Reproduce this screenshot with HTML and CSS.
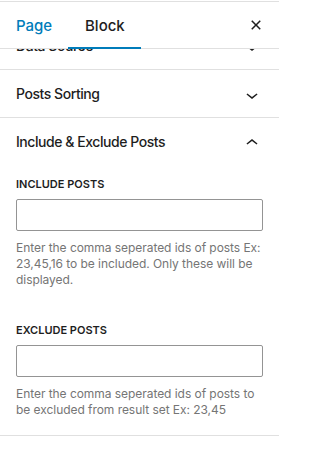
FILE: index.html
```html
<!DOCTYPE html>
<html lang="en">
<head>
<meta charset="utf-8">
<title>Block settings</title>
<link rel="stylesheet" href="styles.css">
</head>
<body>
<div class="sidebar">
  <div class="header">
    <div class="tab tab--page">Page</div>
    <div class="tab tab--block">Block</div>
    <button class="close" aria-label="Close">
      <svg viewBox="0 0 24 24" width="24" height="24"><path d="M12 13.06l3.712 3.713 1.061-1.06L13.061 12l3.713-3.712-1.06-1.06L12 10.938 8.288 7.227l-1.061 1.06L10.939 12l-3.712 3.712 1.06 1.061L12 13.061z"/></svg>
    </button>
  </div>
  <div class="panel panel--scrolled">
    <div class="toggle">
      <span>Data Source</span>
      <svg class="chev" viewBox="0 0 24 24" width="24" height="24"><path d="M17.5 11.6L12 16l-5.5-4.4.9-1.2L12 14l4.6-3.6 1 1.2z"/></svg>
    </div>
  </div>
  <div class="panel">
    <div class="toggle">
      <span>Posts Sorting</span>
      <svg class="chev" viewBox="0 0 24 24" width="24" height="24"><path d="M17.5 11.6L12 16l-5.5-4.4.9-1.2L12 14l4.6-3.6 1 1.2z"/></svg>
    </div>
  </div>
  <div class="panel">
    <div class="toggle">
      <span>Include &amp; Exclude Posts</span>
      <svg class="chev" viewBox="0 0 24 24" width="24" height="24"><path d="M6.5 12.4L12 8l5.5 4.4-.9 1.2L12 10l-4.6 3.6-1-1.2z"/></svg>
    </div>
    <div class="panel-body">
      <div class="control">
        <label class="label">Include Posts</label>
        <input class="field" type="text">
        <p class="help">Enter the comma seperated ids of posts Ex: 23,45,16 to be included. Only these will be displayed.</p>
      </div>
      <div class="control">
        <label class="label">Exclude Posts</label>
        <input class="field" type="text">
        <p class="help">Enter the comma seperated ids of posts to be excluded from result set Ex: 23,45</p>
      </div>
    </div>
  </div>
</div>
</body>
</html>
```

FILE: styles.css
```css
* { box-sizing: border-box; }

html, body {
  width: 279px;
  overflow: hidden;
}

body {
  margin: 0;
  padding-top: 1px;
  background: #fff;
  font-family: Inter, "Noto Sans", sans-serif;
  color: #1e1e1e;
}

.sidebar {
  width: 279px;
  border-top: 1px solid #e0e0e0;
}

.header {
  display: flex;
  height: 47px;
  border-bottom: 1px solid #e0e0e0;
}

.tab {
  position: relative;
  display: flex;
  align-items: center;
  font-size: 15px;
  font-weight: 500;
  white-space: nowrap;
}

.tab--page {
  width: 68px;
  padding-left: 16px;
  color: #007cba;
}

.tab--block {
  width: 73px;
  padding-left: 17px;
  color: #1e1e1e;
}

.tab--block::after {
  content: "";
  position: absolute;
  left: 0;
  right: 0;
  bottom: -1px;
  height: 2px;
  background: #007cba;
}

.close {
  margin: 0 11px 0 auto;
  align-self: center;
  width: 24px;
  height: 24px;
  padding: 0;
  border: 0;
  background: none;
  display: flex;
}

.close svg, .chev { fill: #1e1e1e; }

.panel {
  border-bottom: 1px solid #e0e0e0;
}

.panel--scrolled {
  height: 21px;
  overflow: hidden;
  display: flex;
  flex-direction: column;
  justify-content: flex-end;
}

.toggle {
  flex: none;
  height: 47px;
  display: flex;
  align-items: center;
  justify-content: space-between;
  padding: 0 15px 0 16px;
  font-size: 14px;
  letter-spacing: -0.45px;
  font-weight: 500;
}

.chev { margin-top: 2px; }

.panel-body {
  padding: 11px 16px 17px;
}

.control + .control {
  margin-top: 34px;
}

.label {
  display: block;
  font-size: 11px;
  line-height: 16px;
  font-weight: 600;
  text-transform: uppercase;
  margin-bottom: 7px;
}

.field {
  display: block;
  width: 100%;
  height: 32px;
  margin: 0;
  border: 1px solid #949494;
  border-radius: 2px;
  background: #fff;
}

.help {
  margin: 9px 0 0;
  font-size: 12px;
  letter-spacing: -0.05px;
  line-height: 16px;
  color: #757575;
}
```
